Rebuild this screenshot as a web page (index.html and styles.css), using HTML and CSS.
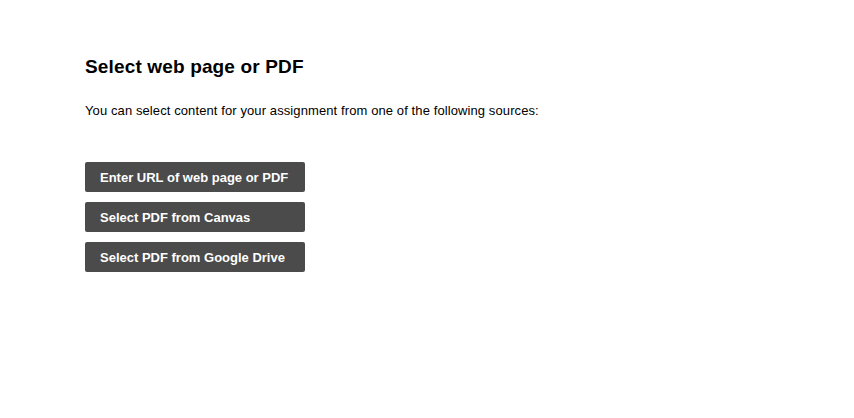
FILE: index.html
```html
<!DOCTYPE html>
<html>
<head>
<meta charset="utf-8">
<link rel="stylesheet" href="styles.css">
</head>
<body>
<main class="page">
  <h1 class="title">Select web page or PDF</h1>
  <p class="intro">You can select content for your assignment from one of the following sources:</p>
  <div class="actions">
    <button class="btn">Enter URL of web page or PDF</button>
    <button class="btn">Select PDF from Canvas</button>
    <button class="btn">Select PDF from Google Drive</button>
  </div>
</main>
</body>
</html>
```
FILE: styles.css
```css
html, body {
  margin: 0;
  padding: 0;
  background: #ffffff;
}
body {
  font-family: "Liberation Sans", Arial, sans-serif;
  color: #000;
}
.page {
  padding: 56px 85px 0;
}
.title {
  margin: 0;
  font-size: 19px;
  font-weight: bold;
  letter-spacing: 0.15px;
  line-height: 22px;
}
.intro {
  margin: 25px 0 0;
  font-size: 13px;
  letter-spacing: 0.1px;
  line-height: 16px;
}
.actions {
  margin-top: 43px;
  display: flex;
  flex-direction: column;
  align-items: flex-start;
  gap: 10px;
}
.btn {
  width: 220px;
  height: 30px;
  padding: 0 15px;
  border: none;
  border-radius: 2px;
  background: #4b4b4b;
  color: #fff;
  font-family: "Liberation Sans", Arial, sans-serif;
  font-weight: bold;
  font-size: 13px;
  text-align: left;
  cursor: pointer;
}
```
